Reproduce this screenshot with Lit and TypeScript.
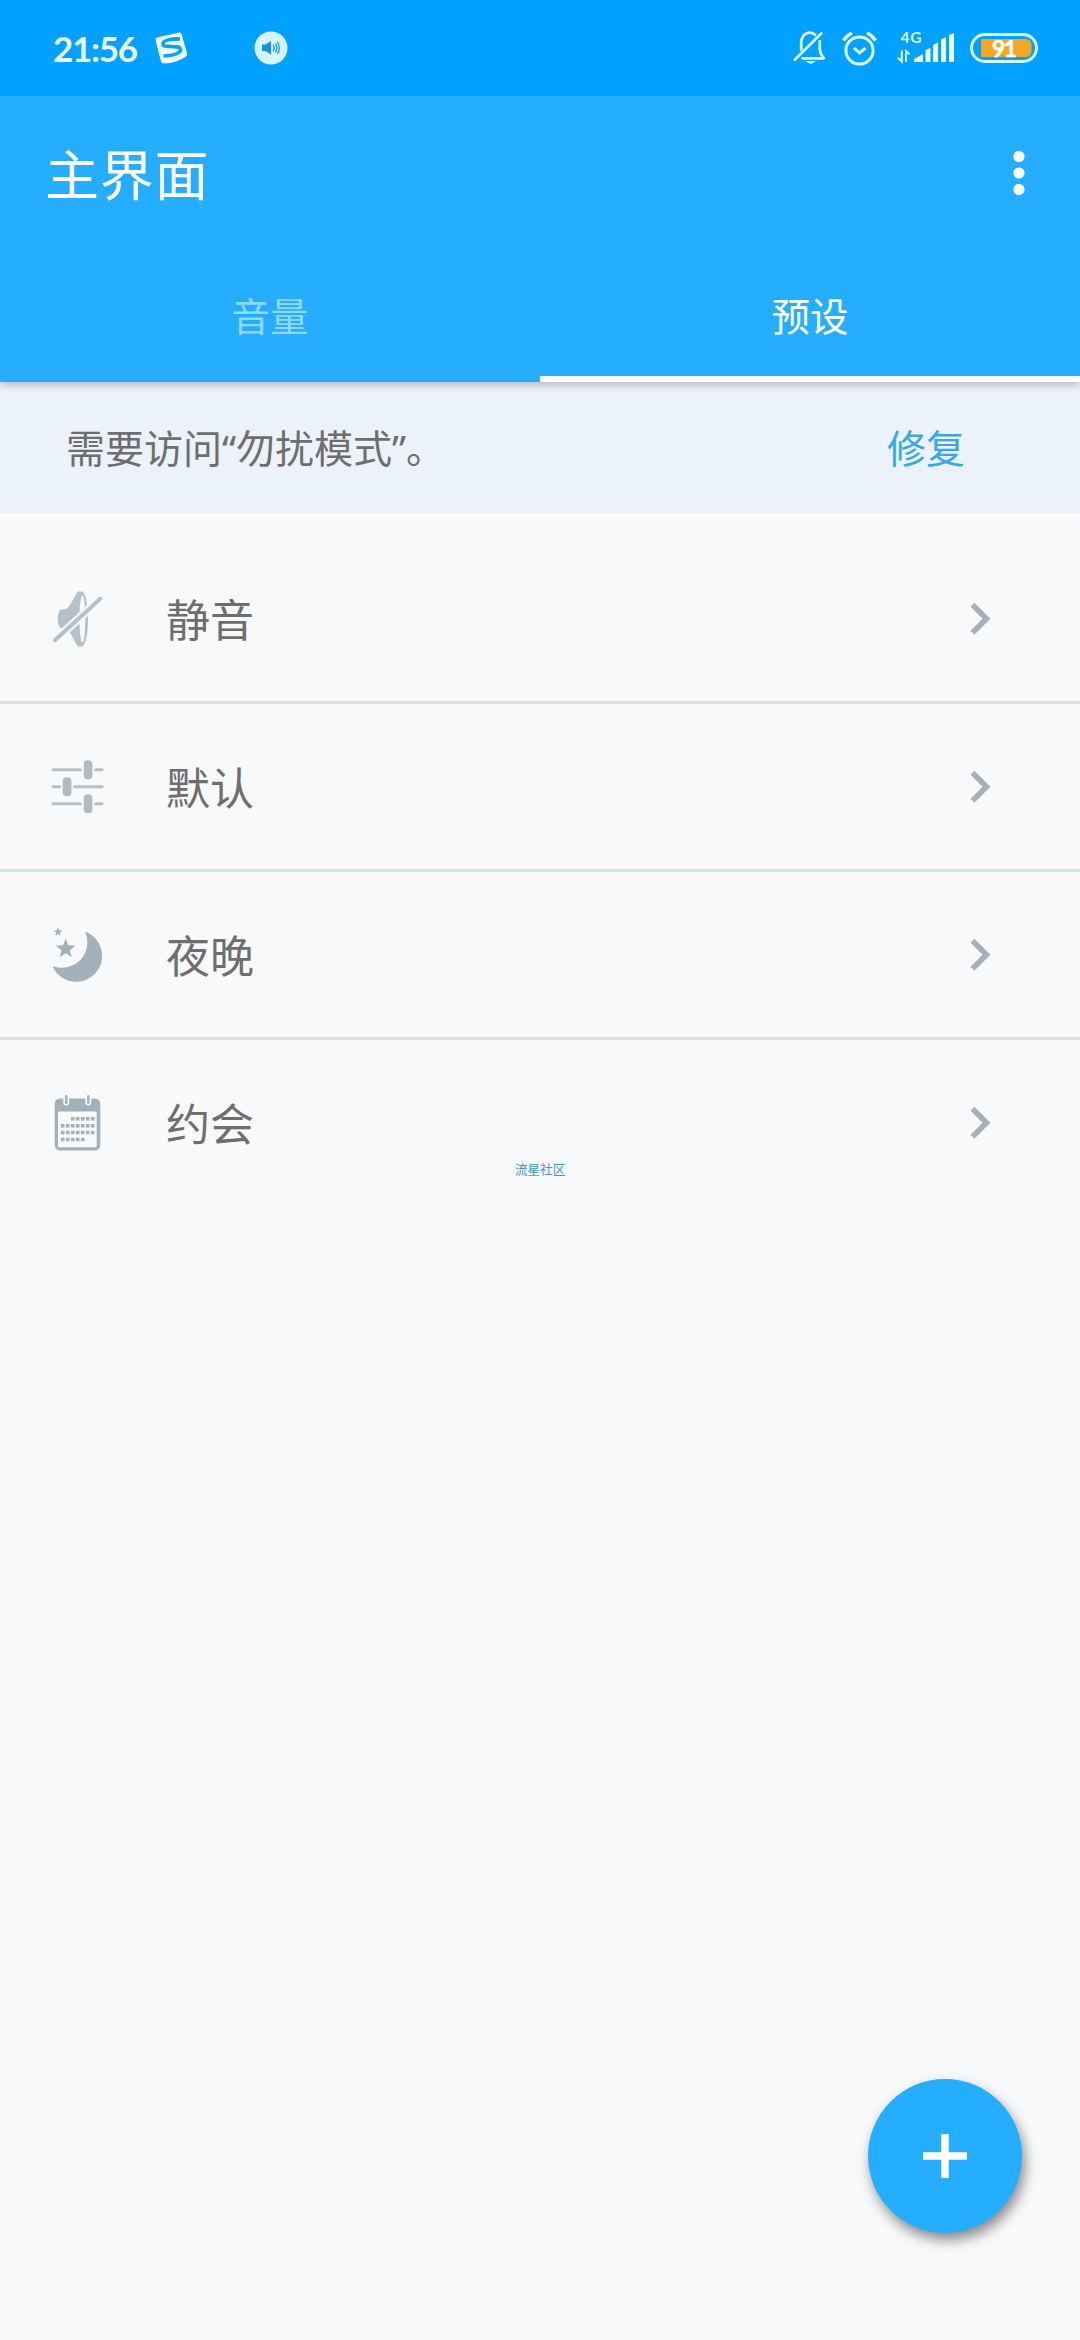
import { LitElement, html, css, svg } from "lit";
import { customElement } from "lit/decorators.js";

const star = (cx: number, cy: number, r: number) =>
  Array.from({ length: 10 }, (_, i) => {
    const a = -Math.PI / 2 + (i * Math.PI) / 5;
    const d = i % 2 ? r * 0.42 : r;
    return `${(cx + d * Math.cos(a)).toFixed(2)},${(cy + d * Math.sin(a)).toFixed(2)}`;
  }).join(" ");

const muteIcon = svg`
  <path d="M30 2.500 H34.500 C38.500 6 40 17 40 30 C40 43 38.500 54 34.500 57.500 H30 C26 52 22 42 18.500 39.300 L13 39 C8.700 37 8.700 22.500 13 20.500 L18.500 20 C23 16.500 26 8 30 2.500Z" fill="#b5c1c8"/>
  <ellipse cx="34.400" cy="30" rx="2.900" ry="23.500" fill="#f7f9fb"/>
  <path d="M4.700 53.300 L54.300 8" stroke="#f7f9fb" stroke-width="8.500"/>
  <path d="M6.900 51.300 L52.300 9.800" stroke="#b5c1c8" stroke-width="4" stroke-linecap="round"/>`;

const sliderIcon = svg`
  <path d="M5 12.800H32.500M47.500 12.800H54M5 29.800H11.500M26.500 29.800H54M5 46.800H32.500M47.500 46.800H54" stroke="#b5c1c8" stroke-width="3" stroke-linecap="round"/>
  <g fill="#b0bcc4"><rect x="35.700" y="3.300" width="8.700" height="19" rx="4"/><rect x="14.700" y="20.300" width="8.700" height="19" rx="4"/><rect x="35.700" y="37.300" width="8.700" height="19" rx="4"/></g>`;

const moonIcon = svg`
  <path d="M38 7.500 A25.300 25.300 0 1 1 5.500 42 A26 26 0 0 0 38 7.500Z" fill="#a3b1ba" stroke="#a3b1ba" stroke-width="1.200" stroke-linejoin="round"/>
  <polygon points=${star(17.7, 23.8, 10.4)} fill="#a3b1ba"/>
  <polygon points=${star(10, 6.9, 4.6)} fill="#a3b1ba"/>`;

const dotRows: [number, number, number][] = [
  [25.8, 2, 7],
  [32.8, 0, 7],
  [39.5, 0, 7],
  [46.5, 0, 5],
];
const calendarIcon = svg`
  <rect x="6.700" y="5.500" width="45.600" height="52" rx="5.500" fill="#a3b1ba"/>
  <rect x="10" y="18.500" width="38.700" height="35.700" rx="1" fill="#f7f9fb"/>
  <path d="M18.300 3V9.500M40.300 3V9.500" stroke="#f7f9fb" stroke-width="6" stroke-linecap="round"/>
  <path d="M18.300 3.200V9.800M40.300 3.200V9.800" stroke="#a3b1ba" stroke-width="2.600" stroke-linecap="round"/>
  ${dotRows.map(([y, from, to]) =>
    Array.from({ length: to - from }, (_, i) => svg`<rect x=${12.9 + (from + i) * 5} y=${y - 1.8} width="3.600" height="3.600" fill="#a3b1ba"/>`)
  )}`;

const presets = [
  { label: "静音", icon: muteIcon },
  { label: "默认", icon: sliderIcon },
  { label: "夜晚", icon: moonIcon },
  { label: "约会", icon: calendarIcon },
];

@customElement("app-root")
export class AppRoot extends LitElement {
  static styles = css`
    :host {
      display: block;
      position: relative;
      width: 1080px;
      height: 2340px;
      overflow: hidden;
      background: #f7f9fb;
      color: #6e6e6e;
      font-family: "Noto Sans", "Noto Sans CJK SC", sans-serif;
    }
    svg { display: block; flex: none; fill: none; overflow: visible; }
    .status {
      position: relative;
      z-index: 1;
      box-sizing: border-box;
      display: flex;
      align-items: center;
      height: 96px;
      padding: 0 42px 0 53px;
      background: #00a1ff;
      color: #e6fbff;
    }
    .time {
      width: 101px;
      font: 700 35px/48px Lato, sans-serif;
      letter-spacing: -1.3px;
      white-space: nowrap;
    }
    .volume { margin-left: 66px; }
    .bell { margin-left: auto; }
    .alarm { margin-left: 15px; }
    .signal { margin-left: 21px; }
    .battery { margin-left: 16px; }
    .small { font: 700 15.500px Lato, sans-serif; letter-spacing: 0.700px; }
    .level { font: 700 23px Lato, sans-serif; letter-spacing: -1.500px; }
    .header {
      position: relative;
      height: 286px;
      display: flex;
      flex-direction: column;
      background: #25aeff;
      color: #fff;
      box-shadow: 0 2px 9px rgba(0, 0, 0, 0.28);
    }
    .bar {
      display: flex;
      align-items: center;
      justify-content: space-between;
      height: 154px;
      padding: 0 55px 0 45px;
    }
    .title { padding-top: 4px; font-size: 54px; line-height: 80px; letter-spacing: 0.700px; }
    .tabs { display: flex; flex: 1; }
    .tab {
      flex: 1;
      box-sizing: border-box;
      display: flex;
      align-items: center;
      justify-content: center;
      padding-top: 2px;
      border-bottom: 6px solid transparent;
      font-size: 38.500px;
      color: #92d7ff;
    }
    .tab.active { color: #fff; border-color: #fff; }
    .notice {
      box-sizing: border-box;
      display: flex;
      align-items: center;
      justify-content: space-between;
      height: 131px;
      padding: 0 115px 0 66px;
      background: #ebf2f9;
      font-size: 39px;
      line-height: 56px;
    }
    .fix { color: #36a7e9; }
    .list { padding-top: 23px; }
    .row {
      box-sizing: border-box;
      display: flex;
      align-items: center;
      height: 168px;
      padding: 0 87px 0 48px;
      border-bottom: 3px solid #d7e1e4;
    }
    .row:last-child { border-color: transparent; }
    .label { flex: 1; margin-left: 58px; padding-top: 2px; font-size: 44px; line-height: 64px; }
    .mark {
      position: absolute;
      left: 0;
      right: 0;
      top: 1159px;
      text-align: center;
      font-size: 12.700px;
      line-height: 20px;
      color: #3f93e6;
    }
    .fab {
      position: absolute;
      left: 868px;
      top: 2079px;
      width: 154px;
      height: 154px;
      border-radius: 50%;
      background: #25aeff;
      box-shadow: 3px 7px 13px rgba(0, 0, 0, 0.45);
      display: grid;
      place-items: center;
    }
  `;

  render() {
    return html`
      <div class="status">
        <span class="time">21:56</span>
        <svg width="34" height="34" viewBox="0 0 34 34">
          <path d="M3 6.500 L25 1.500 Q27 1 27.500 3 L33 22 Q33.500 24 32 25.500 Q23 32 9.500 32.500 Q7.500 32.500 7 30.500 L1.500 9 Q1 7 3 6.500Z" fill="#effcff"/>
          <path d="M26 8 C18 7.500 8 9 9 13.500 C10 17.500 26 13 26.500 18.500 C26.500 23.500 15 25 9.500 25" stroke="#00a1ff" stroke-width="3.600"/>
        </svg>
        <svg class="volume" width="34" height="34" viewBox="0 0 34 34">
          <circle cx="17" cy="17" r="16.500" fill="#d8f3ff"/>
          <path d="M8 13.500H11.500L17 10V23.500L11.500 20H8Z" fill="#0a97df"/>
          <path d="M19.200 13.500Q21 16.500 19.200 20M21.500 12Q24 16.500 21.500 21.500M23.500 10.500Q27 16.500 23.500 23" stroke="#0a97df" stroke-width="1.300"/>
        </svg>
        <svg class="bell" width="34" height="34" viewBox="0 0 34 34" stroke="#d9f7ff" stroke-width="2.800" stroke-linecap="round">
          <path d="M8.200 18.500V12.500C8.200 2 17 -0.500 22 3.800M26.800 10.500V17.500Q27 23 30.800 27.300H9.500" stroke-linejoin="round"/>
          <path d="M1.800 28.800 L28.200 2.500"/>
          <path d="M12.500 30H23Q17.700 35.500 12.500 30Z" fill="#d9f7ff" stroke="none"/>
        </svg>
        <svg class="alarm" width="35" height="35" viewBox="0 0 35 35" stroke="#d9f7ff" stroke-width="3">
          <circle cx="17.500" cy="19.500" r="13.600"/>
          <path d="M1.500 9.500Q4.500 4.500 10 2M33.500 9.500Q30.500 4.500 25 2" stroke-width="3.500"/>
          <path d="M12 17L17.500 22L23.500 17" />
        </svg>
        <svg class="signal" width="56" height="34" viewBox="0 0 56 34" fill="#e6fbff">
          <text class="small" x="2.500" y="12.300" fill="#d9f7ff">4G</text>
          <path d="M3.800 19.500V30.500L0 26.700M8 31V20L11.500 23.300" stroke="#d9f7ff" stroke-width="2" fill="none"/>
          <path d="M16 31V28L25 23V31ZM27.500 31V19L32.500 17V31ZM35 31V14L40 11.500V31ZM43 31V8.500L48 6V31ZM51 31V4L56 2V31Z" fill="#e6fbff"/>
        </svg>
        <svg class="battery" width="68" height="30" viewBox="0 0 68 30">
          <rect x="1.500" y="1.500" width="65" height="27" rx="13.500" stroke="#d9f7ff" stroke-width="3"/>
          <path d="M12.500 6H55Q61.500 6 61.500 12V18Q61.500 24 55 24H12.500Q11 24 11 22.500V7.500Q11 6 12.500 6Z" fill="#f5a623"/>
          <text class="level" x="22" y="23.500" fill="#fff" stroke="#fff" stroke-width="0.500">91</text>
        </svg>
      </div>

      <header class="header">
        <div class="bar">
          <span class="title">主界面</span>
          <svg width="12" height="46" viewBox="0 0 12 46">
            <g fill="#fff"><circle cx="6" cy="6.500" r="5.600"/><circle cx="6" cy="23" r="5.600"/><circle cx="6" cy="39.500" r="5.600"/></g>
          </svg>
        </div>
        <nav class="tabs">
          <div class="tab">音量</div>
          <div class="tab active">预设</div>
        </nav>
      </header>

      <div class="notice">
        <span>需要访问“勿扰模式”。</span>
        <span class="fix">修复</span>
      </div>

      <main class="list">
        ${presets.map(
          (p) => html`<div class="row">
            <svg width="60" height="60" viewBox="0 0 60 60">${p.icon}</svg>
            <span class="label">${p.label}</span>
            <svg width="24" height="36" viewBox="0 0 24 36"><path d="M3.500 3.800L17.500 17.800L3.500 31.800" stroke="#a3b0b9" stroke-width="5.500"/></svg>
          </div>`
        )}
      </main>

      <div class="mark">流星社区</div>
      <div class="fab">
        <svg width="44" height="44" viewBox="0 0 44 44"><path d="M22 0V44M0 22H44" stroke="#fff" stroke-width="7.500"/></svg>
      </div>
    `;
  }
}
